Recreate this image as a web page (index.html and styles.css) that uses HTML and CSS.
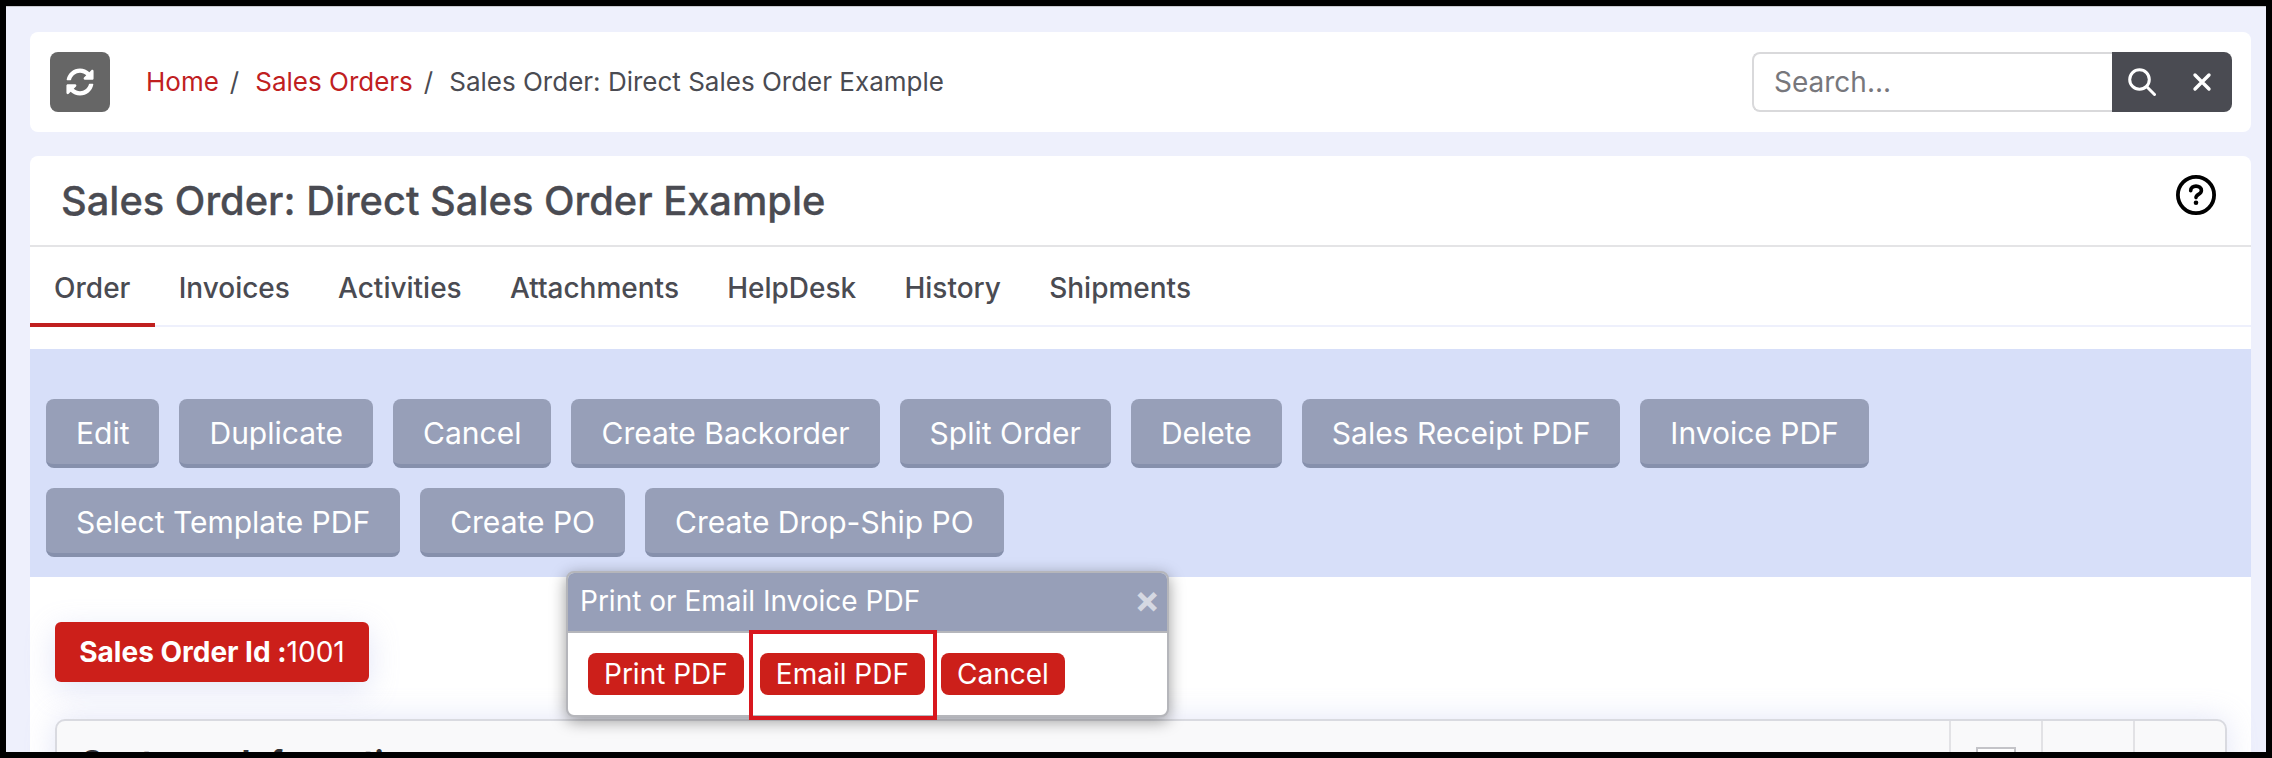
FILE: index.html
```html
<!DOCTYPE html>
<html lang="en">
<head>
<meta charset="utf-8">
<title>Sales Order: Direct Sales Order Example</title>
<link rel="stylesheet" href="styles.css">
</head>
<body>
<div class="frame">
  <div class="page">
    <header class="card topbar">
      <button class="refresh" aria-label="Refresh">
        <svg viewBox="0 0 512 512" width="28" height="28"><path fill="#fff" d="M370.72 133.28C339.458 104.008 298.888 87.962 255.848 88c-77.458.068-144.328 53.178-162.791 126.85-1.344 5.363-6.122 9.15-11.651 9.15H24.103c-7.498 0-13.194-6.807-11.807-14.176C33.933 94.924 134.813 8 256 8c66.448 0 126.791 26.136 171.315 68.685L463.03 40.97C478.149 25.851 504 36.559 504 57.941V192c0 13.255-10.745 24-24 24H345.941c-21.382 0-32.09-25.851-16.971-40.971l41.75-41.749zM32 296h134.059c21.382 0 32.09 25.851 16.971 40.971l-41.75 41.75c31.262 29.273 71.835 45.319 114.876 45.28 77.418-.07 144.315-53.144 162.787-126.849 1.344-5.363 6.122-9.15 11.651-9.15h57.304c7.498 0 13.194 6.807 11.807 14.176C478.067 417.076 377.187 504 256 504c-66.448 0-126.791-26.136-171.315-68.685L48.97 471.03C33.851 486.149 8 475.441 8 454.059V320c0-13.255 10.745-24 24-24z"/></svg>
      </button>
      <nav class="crumbs">
        <a class="crumb-link">Home</a><span class="sep">/</span>
        <a class="crumb-link">Sales Orders</a><span class="sep">/</span>
        <span class="crumb-current">Sales Order: Direct Sales Order Example</span>
      </nav>
      <div class="search">
        <div class="search-input">Search...</div>
        <div class="search-actions">
          <svg viewBox="0 0 28 28" width="28" height="28"><circle cx="11.500" cy="11.500" r="9.800" fill="none" stroke="#fff" stroke-width="3"/><path d="M18.800 18.800L26.500 26.500" stroke="#fff" stroke-width="3" stroke-linecap="round"/></svg>
          <svg class="search-clear" viewBox="0 0 20 20" width="20" height="20"><path d="M3 3L17 17M17 3L3 17" stroke="#fff" stroke-width="3.400" stroke-linecap="round"/></svg>
        </div>
      </div>
    </header>

    <main class="card main">
      <div class="title-row">
        <h1 class="title">Sales Order: Direct Sales Order Example</h1>
        <svg class="help" viewBox="0 0 40 40" width="40" height="40"><circle cx="20" cy="20" r="18.100" fill="none" stroke="#000" stroke-width="3.800"/><path d="M14.700 15.700c0-3 2.400-4.600 5.300-4.600 3 0 5.400 1.700 5.400 4.300 0 2-1.200 3-2.900 4-1.700 1-2.500 1.600-2.500 3.200" fill="none" stroke="#000" stroke-width="3.600" stroke-linecap="round"/><circle cx="20" cy="27.800" r="2.300" fill="#000"/></svg>
      </div>
      <div class="tabs">
        <a class="tab tab-active">Order</a>
        <a class="tab">Invoices</a>
        <a class="tab">Activities</a>
        <a class="tab">Attachments</a>
        <a class="tab">HelpDesk</a>
        <a class="tab">History</a>
        <a class="tab">Shipments</a>
      </div>

      <div class="actions">
        <div class="action-row">
          <button class="action">Edit</button>
          <button class="action">Duplicate</button>
          <button class="action">Cancel</button>
          <button class="action">Create Backorder</button>
          <button class="action">Split Order</button>
          <button class="action">Delete</button>
          <button class="action">Sales Receipt PDF</button>
          <button class="action">Invoice PDF</button>
        </div>
        <div class="action-row">
          <button class="action">Select Template PDF</button>
          <button class="action">Create PO</button>
          <button class="action">Create Drop-Ship PO</button>
        </div>
      </div>

      <div class="body">
        <div class="badge"><b>Sales Order Id :</b>1001</div>
        <section class="info">
          <h2 class="info-title">Customer Information</h2>
          <div class="info-cell"><span class="checkbox"></span></div>
          <div class="info-cell"></div>
          <div class="info-cell"></div>
        </section>
      </div>
    </main>

    <div class="popover">
      <div class="popover-head"><span>Print or Email Invoice PDF</span><span class="popover-close">×</span></div>
      <div class="popover-body">
        <button class="red">Print PDF</button>
        <button class="red">Email PDF</button>
        <button class="red">Cancel</button>
      </div>
    </div>
    <div class="highlight"></div>
  </div>
</div>
</body>
</html>
```
FILE: styles.css
```css
* { box-sizing: border-box; }
html, body { margin: 0; height: 100%; }
body { background: #000; font-family: Inter, "Liberation Sans", sans-serif; color: #4a4b52; }
.frame { width: 2272px; height: 758px; padding: 6px; background: #000; overflow: hidden; }
.page {
  position: relative; height: 746px; overflow: hidden;
  background: #eef0fc; border-top: 1px solid #c9cad0;
  padding: 25px 15px 0 24px;
}
.card { background: #fff; border-radius: 8px; }
.topbar { height: 100px; display: flex; align-items: center; padding: 0 19px 0 20px; margin-bottom: 24px; }
button { font-family: inherit; border: 0; cursor: pointer; }
.refresh { width: 60px; height: 60px; border-radius: 8px; background: #666; display: flex; align-items: center; justify-content: center; padding: 0; }
.crumbs { margin-left: 36px; padding-bottom: 2px; font-size: 26px; display: flex; align-items: center; flex: 1; }
.crumb-link { color: #c0201f; }
.sep { margin: 0 16px 0 11px; color: #4a4b52; }
.crumb-current { color: #4a4b52; }
.search { display: flex; height: 60px; width: 480px; }
.search-input {
  width: 360px; border: 2px solid #d9d9db; border-right: 0; border-radius: 8px 0 0 8px;
  padding: 0 20px; font-size: 28px; line-height: 56px; color: #77777c;
}
.search-actions { width: 120px; background: #4a4b52; border-radius: 0 8px 8px 0; display: flex; align-items: center; justify-content: space-between; padding: 0 20px 0 16px; }
.search-clear { margin-top: -1px; }

.main { height: 700px; }
.title-row { height: 91px; border-bottom: 2px solid #e4e4e6; display: flex; align-items: center; justify-content: space-between; padding: 0 35px 0 30px; }
.title { margin: 0 0 0 1px; font-size: 39.850px; font-weight: 500; color: #4a4b52; -webkit-text-stroke: .3px #4a4b52; }
.help { margin-top: -12px; }
.tabs { height: 80px; display: flex; border-bottom: 2px solid #eef0fc; }
.tab { padding: 0 24.100px; font-size: 28px; font-weight: 500; line-height: 82px; height: 80px; color: #4a4b52; }
.tab-active { border-bottom: 4px solid #c0201f; }

.actions { margin-top: 22px; height: 228px; background: #d7dff9; padding: 50px 16px 0; display: flex; flex-direction: column; gap: 20px; }
.action-row { display: flex; gap: 20px; }
.action {
  height: 69px; padding: 2px 30px 0; background: #979fb8; color: #fff; font-size: 30px;
  border-radius: 8px; border-bottom: 4px solid #8690ac;
}

.body { padding: 45px 24px 0 25px; }
.badge {
  width: 314px; height: 60px; background: #cc1f1a; color: #fff; border-radius: 6px;
  font-size: 28px; line-height: 60px; text-align: center; white-space: nowrap;
  box-shadow: 0 8px 30px rgba(160, 170, 230, .3);
}
.info {
  margin-top: 37px; height: 120px; display: flex; background: #f9f9fa;
  border: 2px solid #d9dae0; border-radius: 10px;
  box-shadow: 0 0 30px rgba(160, 170, 230, .3);
}
.info-title { flex: 1; margin: 0; padding: 22px 23px; font-size: 32px; font-weight: 700; color: #2f3036; }
.info-cell { width: 92px; border-left: 2px solid #e2e2e5; display: flex; justify-content: center; padding-top: 26px; }
.checkbox { width: 40px; height: 40px; border: 2px solid #c4c4c8; background: #fff; }

.popover {
  position: absolute; left: 560px; top: 564px; width: 603px; height: 146px;
  background: #fff; border: 2px solid #b5b6bb; border-radius: 8px; overflow: hidden;
  box-shadow: 0 4px 16px rgba(0, 0, 0, .4);
}
.popover-head {
  height: 60px; background: #979fb8; color: #fff; font-size: 28px; line-height: 56px;
  padding: 0 7px 0 12px; display: flex; justify-content: space-between;
  border-bottom: 2px solid #b5b6bb;
}
.popover-close { font-size: 38px; font-weight: 700; color: #d5d8e2; line-height: 52px; }
.popover-body { display: flex; gap: 16px; padding: 20px 20px; }
.red { height: 42px; padding: 0 16px; background: #cc1f1a; color: #fff; font-size: 28px; border-radius: 8px; }
.highlight { position: absolute; left: 743px; top: 623px; width: 188px; height: 90px; border: 4px solid #d8171e; }
```
